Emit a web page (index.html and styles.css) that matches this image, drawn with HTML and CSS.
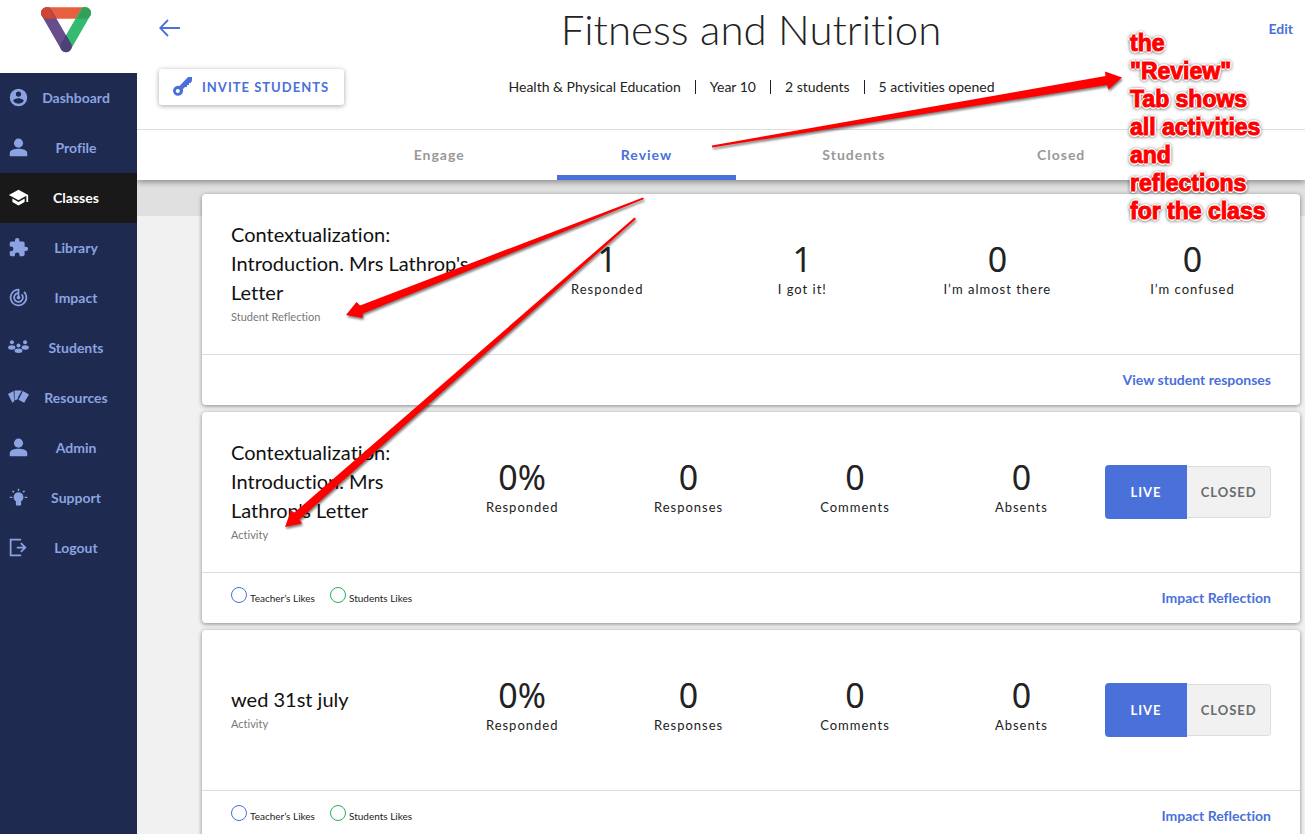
FILE: index.html
```html
<!DOCTYPE html>
<html lang="en">
<head>
<meta charset="utf-8">
<title>Fitness and Nutrition</title>
<link rel="stylesheet" href="styles.css">
</head>
<body>
<div class="app">
  <aside class="side">
    <a class="logo" href="#" aria-label="Home">
      <svg width="52" height="48" viewBox="0 0 52 48" fill="none" stroke-width="11.4" stroke-linecap="round">
        <path stroke="#e85f40" d="M6.700 7H45.300"/>
        <path stroke="#34bb70" d="M45.300 7L26 40.500"/>
        <path stroke="#674d8c" d="M6.700 7L26 40.500"/>
        <path fill="#cf452f" stroke="none" d="M6.700 1.300h2.500L15.200 12.700H6.700a5.700 5.700 0 1 1 0-11.400z"/>
        <path fill="#33a057" stroke="none" d="M45.300 1.300h-2.500L36.800 12.700h8.500a5.700 5.700 0 1 0 0-11.400z"/>
        <path fill="#4b4377" stroke="none" d="M26 29l5 8.500a5.700 5.700 0 1 1-10 0z"/>
      </svg>
    </a>
    <nav class="menu">
      <a class="item" href="#">
        <svg class="icon" viewBox="0 0 24 24"><path d="M12 2a10 10 0 1 0 0 20 10 10 0 0 0 0-20zm0 3a3 3 0 1 1 0 6 3 3 0 0 1 0-6zm0 14.200a7.200 7.200 0 0 1-6-3.220c.03-2 4-3.080 6-3.080s5.970 1.090 6 3.080a7.200 7.200 0 0 1-6 3.220z"/></svg>
        <span class="name">Dashboard</span></a>
      <a class="item" href="#">
        <svg class="icon" viewBox="0 0 24 24"><circle cx="12" cy="7" r="5.200"/><path d="M2 22v-3.500C2 14.800 7.500 13.500 12 13.500s10 1.300 10 5V22z"/></svg>
        <span class="name">Profile</span></a>
      <a class="item active" href="#" aria-current="page">
        <svg class="icon" viewBox="0 0 24 24"><path d="M5 13.180v4L12 21l7-3.820v-4L12 17zM12 3 1 9l11 6 9-4.910V17h2V9z"/></svg>
        <span class="name">Classes</span></a>
      <a class="item" href="#">
        <svg class="icon" viewBox="0 0 24 24"><path d="M20.500 11H19V7a2 2 0 0 0-2-2h-4V3.500a2.500 2.500 0 0 0-5 0V5H4a2 2 0 0 0-2 2v3.800h1.500a2.700 2.700 0 0 1 0 5.400H2V20c0 1.100.9 2 2 2h3.800v-1.500a2.700 2.700 0 0 1 5.400 0V22H17a2 2 0 0 0 2-2v-4h1.500a2.500 2.500 0 0 0 0-5z"/></svg>
        <span class="name">Library</span></a>
      <a class="item" href="#">
        <svg class="icon" viewBox="0 0 24 24"><path d="m19.070 4.930-1.410 1.410A8 8 0 1 1 11 4.070v2.020A6 6 0 1 0 16.240 7.760l-1.410 1.410A4 4 0 1 1 11 8.140v2.140a2 2 0 1 0 2 0V2h-1a10 10 0 1 0 7.070 2.930z"/></svg>
        <span class="name">Impact</span></a>
      <a class="item" href="#">
        <svg class="icon wide" viewBox="0 0 24 24"><circle cx="4.500" cy="6" r="2.300"/><circle cx="19.500" cy="6" r="2.300"/><circle cx="12" cy="9.700" r="2.300"/><ellipse cx="4.300" cy="12" rx="4.100" ry="2.500"/><ellipse cx="19.700" cy="12" rx="4.100" ry="2.500"/><ellipse cx="12" cy="15.700" rx="4.500" ry="2.500"/></svg>
        <span class="name">Students</span></a>
      <a class="item" href="#">
        <svg class="icon wide" viewBox="0 0 24 24"><path d="m0 8 6.500-3.500L7 16.500 5 18zM7.500 4H16l-4 6.500L11 14l-3.500 1.500zM17 4.500l7 4L18.500 18l-6.500-3.500z"/></svg>
        <span class="name">Resources</span></a>
      <a class="item" href="#">
        <svg class="icon" viewBox="0 0 24 24"><circle cx="12" cy="7" r="5.200"/><path d="M2 22v-3.500C2 14.800 7.500 13.500 12 13.500s10 1.300 10 5V22z"/></svg>
        <span class="name">Admin</span></a>
      <a class="item" href="#">
        <svg class="icon" viewBox="0 0 24 24"><path d="M12 6a5.600 5.600 0 0 0-3 10.300V20a1 1 0 0 0 1 1h4a1 1 0 0 0 1-1v-3.700A5.600 5.600 0 0 0 12 6zM11.200 2h1.600v2.500h-1.600zM2 11h3v1.600H2zM19 11h3v1.600h-3zM4.500 5l1.200-1.200 1.700 1.700-1.200 1.200zM18.300 3.800 19.500 5l-1.700 1.700-1.200-1.200z"/></svg>
        <span class="name">Support</span></a>
      <a class="item" href="#">
        <svg class="icon" viewBox="0 0 24 24"><path d="M2 2h13v2H4v16h11v2H2zM10 11h7.200l-3.200-3.300 1.400-1.400L21.200 12l-5.800 5.700L14 16.300l3.200-3.300H10z"/></svg>
        <span class="name">Logout</span></a>
    </nav>
  </aside>

  <main class="main">
    <header class="head">
      <div class="row top">
        <a class="back" href="#" aria-label="Back">
          <svg width="22" height="18" viewBox="0 0 22 18" fill="none" stroke="#4a70da" stroke-width="1.800"><path d="M1 9h20M9 1 1.200 9 9 17"/></svg>
        </a>
        <h1 class="title">Fitness and Nutrition</h1>
        <a class="link edit" href="#">Edit</a>
      </div>
      <div class="row info">
        <button class="invite" type="button">
          <svg width="19" height="19" viewBox="0 0 19 19"><path fill="#4a70da" fill-rule="evenodd" d="M15 0h4v4l-1 1v1h-2v2h-2v2h-2L9.800 12.200A5 5 0 1 1 6.500 9zM4.800 12a2 2 0 1 0 0 4 2 2 0 0 0 0-4z"/></svg>
          INVITE STUDENTS
        </button>
        <ul class="meta">
          <li>Health &amp; Physical Education</li>
          <li>Year 10</li>
          <li>2 students</li>
          <li>5 activities opened</li>
        </ul>
      </div>
      <nav class="tabs">
        <a class="tab" href="#">Engage</a>
        <a class="tab current" href="#" aria-current="page">Review</a>
        <a class="tab" href="#">Students</a>
        <a class="tab" href="#">Closed</a>
      </nav>
    </header>

    <div class="content">
      <article class="card">
        <div class="body reflection">
          <div class="about">
            <h2 class="heading">Contextualization: Introduction. Mrs Lathrop's Letter</h2>
            <p class="kind">Student Reflection</p>
          </div>
          <div class="stat"><b class="num">1</b><span>Responded</span></div>
          <div class="stat"><b class="num">1</b><span>I got it!</span></div>
          <div class="stat"><b class="num">0</b><span>I’m almost there</span></div>
          <div class="stat"><b class="num">0</b><span>I’m confused</span></div>
        </div>
        <footer class="foot"><a class="link" href="#">View student responses</a></footer>
      </article>

      <article class="card">
        <div class="body activity">
          <div class="about">
            <h2 class="heading">Contextualization: Introduction. Mrs Lathrop's Letter</h2>
            <p class="kind">Activity</p>
          </div>
          <div class="stat"><b class="num">0%</b><span>Responded</span></div>
          <div class="stat"><b class="num">0</b><span>Responses</span></div>
          <div class="stat"><b class="num">0</b><span>Comments</span></div>
          <div class="stat"><b class="num">0</b><span>Absents</span></div>
          <div class="toggle"><button class="live" type="button">LIVE</button><button class="closed" type="button">CLOSED</button></div>
        </div>
        <footer class="foot">
          <div class="likes"><span class="like teacher">Teacher’s Likes</span><span class="like student">Students Likes</span></div>
          <a class="link" href="#">Impact Reflection</a>
        </footer>
      </article>

      <article class="card">
        <div class="body activity">
          <div class="about">
            <h2 class="heading">wed 31st july</h2>
            <p class="kind">Activity</p>
          </div>
          <div class="stat"><b class="num">0%</b><span>Responded</span></div>
          <div class="stat"><b class="num">0</b><span>Responses</span></div>
          <div class="stat"><b class="num">0</b><span>Comments</span></div>
          <div class="stat"><b class="num">0</b><span>Absents</span></div>
          <div class="toggle"><button class="live" type="button">LIVE</button><button class="closed" type="button">CLOSED</button></div>
        </div>
        <footer class="foot">
          <div class="likes"><span class="like teacher">Teacher’s Likes</span><span class="like student">Students Likes</span></div>
          <a class="link" href="#">Impact Reflection</a>
        </footer>
      </article>
    </div>
  </main>

  <svg class="arrows" width="1305" height="834" viewBox="0 0 1305 834" fill="#f00" aria-hidden="true">
    <path d="M712 145.500 1105.500 76 1105 71.500 1122 77.500 1108.500 89.500 1107 85 712 147.500z"/>
    <path d="M643 197.500 360 305.500 356.500 302 346 315 362.500 318 363 313.500 644 199z"/>
    <path d="M634.500 217.500 294.500 512.500 291 510.500 285 527 302 523.500 299.500 519.500 636 219z"/>
  </svg>
  <p class="note">the<br>"Review"<br>Tab shows<br>all activities<br>and<br>reflections<br>for the class</p>
</div>
</body>
</html>
```

FILE: styles.css
```css
* { box-sizing: border-box; }

body {
  margin: 0;
  font: 14px/20px Lato, "Noto Sans", sans-serif;
  font-variant-ligatures: none;
  color: #222;
  background: #f1f1f1;
}

a { color: inherit; text-decoration: none; }
h1, h2, p, ul { margin: 0; padding: 0; }
button { font: inherit; border: 0; cursor: pointer; }

.app {
  position: relative;
  display: flex;
  height: 100vh;
  overflow: hidden;
}

/* Sidebar */
.side {
  flex: 0 0 137px;
  background: #1e2a4f;
  color: #8ba3e0;
}

.logo {
  display: flex;
  justify-content: center;
  height: 73px;
  padding: 6px 5px 0 0;
  background: #fff;
}

.item {
  display: flex;
  align-items: center;
  height: 50px;
  padding: 0 14px 0 8px;
  font-weight: 700;
}

.item.active { background: #191919; color: #fff; }
.icon { width: 21px; height: 21px; margin-bottom: 2px; fill: currentColor; }
.name { flex: 1; text-align: center; }

/* Header */
.main {
  flex: 1;
  min-width: 0;
  overflow: hidden;
  background: linear-gradient(#e0e0e0 216px, #f1f1f1 216px);
}

.head {
  position: relative;
  background: #fff;
  box-shadow: 0 2px 6px rgba(0, 0, 0, .4);
}

.row {
  display: flex;
  align-items: center;
  padding: 0 12px 0 22px;
}

.top { height: 58px; }
.back { width: 88px; height: 20px; }

.title {
  flex: 1;
  text-align: center;
  font-size: 42px;
  line-height: 58px;
  font-weight: 300;
}

.link { color: #4a70da; font-weight: 700; }
.edit { width: 38px; text-align: right; }

.info {
  height: 72px;
  padding-bottom: 14px;
  border-bottom: 1px solid #ddd;
}

.invite {
  display: flex;
  align-items: center;
  gap: 10px;
  height: 36px;
  padding: 0 15px 0 14px;
  border-radius: 3px;
  background: #fff;
  color: #4a70da;
  font-size: 13px;
  font-weight: 700;
  letter-spacing: 1px;
  white-space: nowrap;
  box-shadow: 0 1px 5px rgba(0, 0, 0, .35);
}

.meta {
  flex: 1;
  display: flex;
  justify-content: center;
  padding-right: 134px;
  list-style: none;
  line-height: 14px;
}

.meta li { padding: 0 14px; white-space: nowrap; }
.meta li + li { border-left: 1px solid #222; }

.tabs {
  display: flex;
  width: 71%;
  margin-left: 17%;
}

.tab {
  flex: 1;
  margin: 0 14px;
  height: 50px;
  line-height: 50px;
  text-align: center;
  font-weight: 700;
  letter-spacing: 1px;
  color: #999;
}

.tab.current { color: #4a70da; box-shadow: inset 0 -5px #4a70da; }

/* Cards */
.content {
  display: flex;
  flex-direction: column;
  gap: 7px;
  padding: 14px 5px 14px 65px;
}

.card {
  border-radius: 4px;
  background: #fff;
  box-shadow: 0 1px 4px rgba(0, 0, 0, .45);
}

.body {
  display: grid;
  align-items: center;
  min-height: 161px;
  border-bottom: 1px solid #ddd;
}

.reflection {
  grid-template-columns: 10fr repeat(4, 7fr);
  padding: 0 10px 0 29px;
}

.activity {
  grid-template-columns: 5fr repeat(5, 4fr);
  padding: 0 29px;
}

.about { padding: 0 28px 2px 0; }

.heading {
  font-size: 20px;
  line-height: 29px;
  font-weight: 400;
  color: #111;
}

.kind { font-size: 11px; color: #777; }

.stat {
  display: flex;
  flex-direction: column;
  padding-bottom: 10px;
  text-align: center;
  font-size: 13px;
  letter-spacing: 1px;
}

.num {
  font-family: "Noto Sans", sans-serif;
  font-size: 34px;
  line-height: 40px;
  font-weight: 400;
  letter-spacing: 0;
}

.toggle { display: flex; align-items: center; }

.toggle button {
  flex: 1;
  padding: 0;
  font-size: 13px;
  font-weight: 700;
  letter-spacing: 1px;
}

.toggle .live {
  height: 54px;
  border-radius: 4px 0 0 4px;
  background: #4a70da;
  color: #fff;
}

.toggle .closed {
  height: 52px;
  border: 1px solid #ddd;
  border-left: 0;
  border-radius: 0 4px 4px 0;
  background: #f1f1f1;
  color: #6b6b6b;
}

.foot {
  display: flex;
  align-items: center;
  min-height: 50px;
  padding: 0 29px;
}

.foot .link { margin-left: auto; }
.likes { display: flex; gap: 15px; font-size: 10px; }
.like { display: flex; align-items: center; gap: 3px; }

.like::before {
  content: "";
  width: 14px;
  height: 14px;
  margin-bottom: 6px;
  border: 1px solid #4a70da;
  border-radius: 50%;
}

.like.student::before { border-color: #1fb25a; }

/* Annotations over the page */
.arrows {
  position: absolute;
  top: 0;
  left: 0;
  pointer-events: none;
  filter: drop-shadow(1px 2px 1px rgba(0, 0, 0, .5));
}

.note {
  position: absolute;
  top: 29px;
  left: 1130px;
  font: 700 23px/28px "Liberation Sans", Arial, sans-serif;
  color: #f00;
  white-space: nowrap;
  -webkit-text-stroke: 1px #f00;
  text-shadow:
    2px 0 #fff, -2px 0 #fff, 0 2px #fff, 0 -2px #fff,
    1px 1px #fff, -1px 1px #fff, 1px -1px #fff, -1px -1px #fff,
    0 0 4px #000, 0 1px 4px #000;
}
```
